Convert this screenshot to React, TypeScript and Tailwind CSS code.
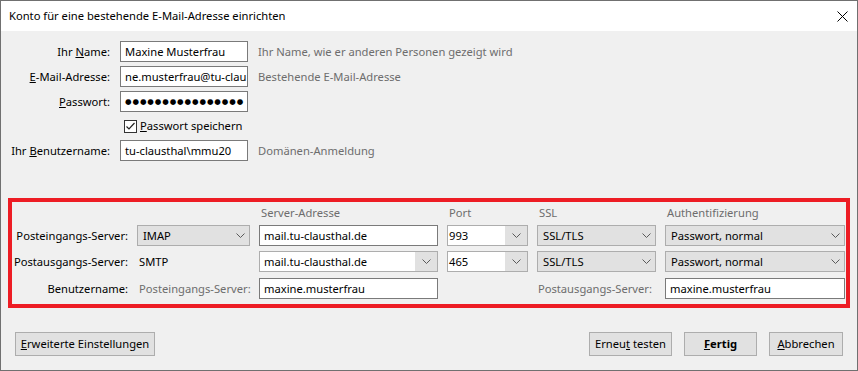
import type { ReactNode } from "react";

const font = "font-['Noto_Sans','Liberation_Sans',sans-serif]";

function Chevron(): ReactNode {
  return (
    <svg width="9" height="5" viewBox="0 0 9 5" className="shrink-0">
      <polyline points="0.5,0.5 4.5,4.5 8.5,0.5" fill="none" stroke="#5a5a5a" strokeWidth="1" />
    </svg>
  );
}

function Input({ value, className = "" }: { value: string; className?: string }): ReactNode {
  return (
    <div className={`h-[21px] border border-[#7a7a7a] bg-white pl-[4px] flex items-center overflow-hidden whitespace-nowrap ${className}`}>
      {value}
    </div>
  );
}

function Select({ value }: { value: string }): ReactNode {
  return (
    <div className="h-[21px] border border-[#adadad] bg-[#e1e1e1] pl-[5px] flex items-center justify-between whitespace-nowrap">
      <span>{value}</span>
      <span className="w-[18px] flex justify-center">
        <Chevron />
      </span>
    </div>
  );
}

function Combo({ value, pad = "pl-[1px]" }: { value: string; pad?: string }): ReactNode {
  return (
    <div className="h-[21px] border border-[#adadad] bg-[#e1e1e1] flex items-stretch whitespace-nowrap">
      <div className={`flex-1 bg-white flex items-center ${pad}`}>{value}</div>
      <div className="w-[22px] flex items-center justify-center">
        <Chevron />
      </div>
    </div>
  );
}

function Row({ label, children, hint }: { label: ReactNode; children: ReactNode; hint?: string }): ReactNode {
  return (
    <div className="flex items-center h-[21px] whitespace-nowrap">
      <div className="w-[109px] text-right">{label}</div>
      <div className="ml-[10px] w-[128px]">{children}</div>
      {hint && <div className="ml-[10px] text-[#6d6d6d]">{hint}</div>}
    </div>
  );
}

function Btn({ children, className = "" }: { children: ReactNode; className?: string }): ReactNode {
  return (
    <div className={`h-[24px] border border-[#adadad] bg-[#e1e1e1] flex items-center justify-center whitespace-nowrap ${className}`}>
      {children}
    </div>
  );
}

export default function App(): ReactNode {
  return (
    <div className={`${font} w-[858px] h-[371px] border border-[#707070] bg-[#f0f0f0] flex flex-col text-[11.2px] leading-[16px] text-black`}>
      <div className="h-[30px] bg-white flex items-center justify-between pl-[8px] pr-[9px]">
        <span>Konto für eine bestehende E-Mail-Adresse einrichten</span>
        <svg width="11" height="11" viewBox="0 0 11 11">
          <path d="M0.5 0.5 L10.5 10.5 M10.5 0.5 L0.5 10.5" stroke="#000" strokeWidth="1" />
        </svg>
      </div>

      <div className="pt-[10px] flex flex-col gap-[4px]">
        <Row label={<>Ihr <u>N</u>ame:</>} hint="Ihr Name, wie er anderen Personen gezeigt wird">
          <Input value="Maxine Musterfrau" />
        </Row>
        <Row label={<><u>E</u>-Mail-Adresse:</>} hint="Bestehende E-Mail-Adresse">
          <Input value="ne.musterfrau@tu-clau" />
        </Row>
        <Row label={<><u>P</u>asswort:</>}>
          <div className="h-[21px] border border-[#7a7a7a] bg-white pl-[4px] flex items-center overflow-hidden whitespace-nowrap font-['DejaVu_Sans',sans-serif] text-[7.5px] tracking-[0.9px]">
            ●●●●●●●●●●●●●●●●
          </div>
        </Row>
        <div className="h-[20px] flex items-center pl-[123px] whitespace-nowrap">
          <div className="w-[13px] h-[13px] border border-[#333] bg-white flex items-center justify-center">
            <svg width="11" height="11" viewBox="0 0 11 11">
              <polyline points="1.5,5.5 4,8 9.5,2" fill="none" stroke="#222" strokeWidth="1.2" />
            </svg>
          </div>
          <span className="ml-[3px]"><u>P</u>asswort speichern</span>
        </div>
        <Row label={<>Ihr <u>B</u>enutzername:</>} hint="Domänen-Anmeldung">
          <Input value="tu-clausthal\mmu20" />
        </Row>
      </div>

      <div className="mt-[37px] ml-[7px] w-[842px] border-[4px] border-[#ed1c24] pt-[3px] pb-[5px] whitespace-nowrap">
        <div className="grid grid-cols-[116px_113px_179px_81px_119px_180px] gap-x-[9px] items-center">
          <div />
          <div />
          <div className="pl-[2px] text-[#6d6d6d]">Server-Adresse</div>
          <div className="pl-[2px] text-[#6d6d6d]">Port</div>
          <div className="pl-[2px] text-[#6d6d6d]">SSL</div>
          <div className="pl-[2px] text-[#6d6d6d]">Authentifizierung</div>

          <div className="mt-[4px] text-right">Posteingangs-Server:</div>
          <div className="mt-[4px]"><Select value="IMAP" /></div>
          <div className="mt-[4px]"><Input value="mail.tu-clausthal.de" /></div>
          <div className="mt-[4px]"><Combo value="993" /></div>
          <div className="mt-[4px]"><Select value="SSL/TLS" /></div>
          <div className="mt-[4px]"><Select value="Passwort, normal" /></div>

          <div className="mt-[5px] text-right">Postausgangs-Server:</div>
          <div className="mt-[5px] pl-[2px]">SMTP</div>
          <div className="mt-[5px]"><Combo value="mail.tu-clausthal.de" pad="pl-[4px]" /></div>
          <div className="mt-[5px]"><Combo value="465" /></div>
          <div className="mt-[5px]"><Select value="SSL/TLS" /></div>
          <div className="mt-[5px]"><Select value="Passwort, normal" /></div>

          <div className="mt-[6px] text-right">Benutzername:</div>
          <div className="mt-[6px] pl-[2px] text-[#6d6d6d]">Posteingangs-Server:</div>
          <div className="mt-[6px]"><Input value="maxine.musterfrau" /></div>
          <div className="mt-[6px] col-span-2 text-right pr-[4px] text-[#6d6d6d]">Postausgangs-Server:</div>
          <div className="mt-[6px]"><Input value="maxine.musterfrau" /></div>
        </div>
      </div>

      <div className="mt-[24px] flex items-center pl-[14px] pr-[14px]">
        <Btn className="w-[140px]"><span><u>E</u>rweiterte Einstellungen</span></Btn>
        <div className="ml-auto flex gap-[12px]">
          <Btn className="w-[83px]"><span>Erneu<u>t</u> testen</span></Btn>
          <Btn className="w-[73px] font-bold"><span><u>F</u>ertig</span></Btn>
          <Btn className="w-[74px]"><span><u>A</u>bbrechen</span></Btn>
        </div>
      </div>
    </div>
  );
}
